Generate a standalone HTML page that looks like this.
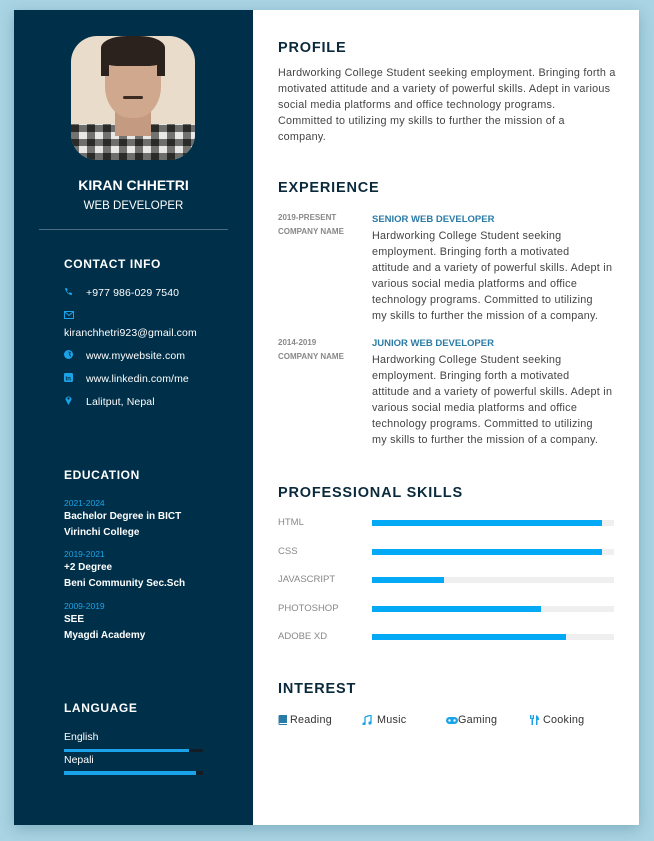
<!DOCTYPE html>
<html><head><meta charset="utf-8">
<style>
*{margin:0;padding:0;box-sizing:border-box}
html,body{width:654px;height:841px;overflow:hidden;background:#a9d4e3;font-family:"Liberation Sans",sans-serif}
.card{position:absolute;left:14px;top:10px;width:625px;height:815px;background:#fff;box-shadow:0 4px 14px rgba(0,60,90,.25)}
.side{position:absolute;left:14px;top:10px;width:239px;height:815px;background:#003049}
.t{position:absolute;white-space:nowrap;line-height:16px;margin-top:1px}
.w{color:#fff}
.h{font-weight:bold;font-size:12px;letter-spacing:.6px;color:#fff}
.rh{font-weight:bold;font-size:14.5px;letter-spacing:.8px;color:#0a2a3c}
.sm{font-size:10.5px;color:#fff;letter-spacing:.1px}
.ed{font-size:10px;font-weight:bold;color:#fff}
.yr{font-size:8.5px;color:#1aa3e8}
.p{font-size:10.8px;color:#444;letter-spacing:.25px}
.gy{font-size:8px;font-weight:bold;color:#888}
.bt{font-size:9.5px;font-weight:bold;color:#2a7ba6}
.sk{font-size:9.5px;color:#888}
.bar{position:absolute;left:372px;width:242px;height:6px;background:#efefef}
.bar i{display:block;height:6px;background:#03a9f4}
.ic{position:absolute;color:#1aa3e8}
</style></head><body>
<div class="card"></div>
<div class="side"></div>

<!-- photo -->
<div style="position:absolute;left:71px;top:36px;width:124px;height:124px;border-radius:26px;overflow:hidden;background:#e9dccb">
 <div style="position:absolute;left:0;top:88px;width:124px;height:36px;background:repeating-linear-gradient(90deg,#2a2a2a 0 8px,#e6e6e6 8px 16px),#555;opacity:.9"></div>
 <div style="position:absolute;left:0;top:88px;width:124px;height:36px;background:repeating-linear-gradient(0deg,rgba(30,30,30,.6) 0 7px,rgba(240,240,240,.3) 7px 14px)"></div>
 <div style="position:absolute;left:44px;top:74px;width:36px;height:26px;background:#c49a80"></div>
 <div style="position:absolute;left:34px;top:12px;width:56px;height:70px;border-radius:45%;background:#d0a88e"></div>
 <div style="position:absolute;left:30px;top:0;width:64px;height:30px;border-radius:40% 40% 25% 25%;background:#2b221e"></div>
 <div style="position:absolute;left:30px;top:20px;width:8px;height:20px;background:#2b221e"></div>
 <div style="position:absolute;left:86px;top:20px;width:8px;height:20px;background:#2b221e"></div>
 <div style="position:absolute;left:52px;top:60px;width:20px;height:3px;background:#3a2a22;border-radius:2px"></div>
</div>

<div class="t w" style="left:14px;width:239px;text-align:center;top:176px;font-weight:bold;font-size:14px">KIRAN CHHETRI</div>
<div class="t w" style="left:14px;width:239px;text-align:center;top:197px;font-size:11.5px">WEB DEVELOPER</div>
<div style="position:absolute;left:39px;top:229px;width:189px;height:1px;background:#4a6b80"></div>

<div class="t h" style="left:64px;top:255px">CONTACT INFO</div>
<svg class="ic" style="left:64px;top:287px" width="9" height="9" viewBox="0 0 10 10"><path d="M1 1.5 3 1 4.2 3.5 3 4.5Q4 6.5 5.5 7L6.5 5.8 9 7 8.5 9Q3 8.5 1 1.5Z" fill="#1aa3e8"/></svg>
<div class="t sm" style="left:86px;top:284px">+977 986-029 7540</div>
<svg class="ic" style="left:64px;top:311px" width="10" height="8" viewBox="0 0 10 8"><rect x=".5" y=".5" width="9" height="7" fill="none" stroke="#1aa3e8"/><path d="M.5 .5 5 4.5 9.5 .5" fill="none" stroke="#1aa3e8"/></svg>
<div class="t sm" style="left:64px;top:324px">kiranchhetri923@gmail.com</div>
<svg class="ic" style="left:64px;top:350px" width="9" height="9" viewBox="0 0 10 10"><circle cx="5" cy="5" r="5" fill="#1aa3e8"/><path d="M5 2 7 3 6 5 7.5 7" stroke="#003049" fill="none"/></svg>
<div class="t sm" style="left:86px;top:347px">www.mywebsite.com</div>
<svg class="ic" style="left:64px;top:373px" width="9" height="9" viewBox="0 0 10 10"><rect width="10" height="10" rx="1.5" fill="#1aa3e8"/><text x="1.6" y="8.3" font-size="7" font-weight="bold" fill="#003049" font-family="Liberation Sans">in</text></svg>
<div class="t sm" style="left:86px;top:370px">www.linkedin.com/me</div>
<svg class="ic" style="left:65px;top:395px" width="7" height="10" viewBox="0 0 7 10"><path d="M3.5 10 .5 4.5A3 3 0 1 1 6.5 4.5Z" fill="#1aa3e8"/><circle cx="3.5" cy="3.4" r="1.2" fill="#003049"/></svg>
<div class="t sm" style="left:86px;top:393px">Lalitput, Nepal</div>

<div class="t h" style="left:64px;top:466px">EDUCATION</div>
<div class="t yr" style="left:64px;top:494px">2021-2024</div>
<div class="t ed" style="left:64px;top:508px">Bachelor Degree in BICT</div>
<div class="t ed" style="left:64px;top:524px">Virinchi College</div>
<div class="t yr" style="left:64px;top:545px">2019-2021</div>
<div class="t ed" style="left:64px;top:559px">+2 Degree</div>
<div class="t ed" style="left:64px;top:575px">Beni Community Sec.Sch</div>
<div class="t yr" style="left:64px;top:597px">2009-2019</div>
<div class="t ed" style="left:64px;top:611px">SEE</div>
<div class="t ed" style="left:64px;top:627px">Myagdi Academy</div>

<div class="t h" style="left:64px;top:699px">LANGUAGE</div>
<div class="t ed" style="left:64px;top:728px;font-weight:normal;font-size:10.5px">English</div>
<div style="position:absolute;left:64px;top:749px;width:139px;height:3px;background:#111c24"><div style="width:125px;height:3px;background:#1aa3e8"></div></div>
<div class="t ed" style="left:64px;top:751px;font-weight:normal;font-size:10.5px">Nepali</div>
<div style="position:absolute;left:64px;top:771px;width:139px;height:4px;background:#111c24"><div style="width:132px;height:4px;background:#1aa3e8"></div></div>

<!-- right -->
<div class="t rh" style="left:278px;top:39px">PROFILE</div>
<div class="t p" style="left:278px;top:64px">Hardworking College Student seeking employment. Bringing forth a<br>motivated attitude and a variety of powerful skills. Adept in various<br>social media platforms and office technology programs.<br>Committed to utilizing my skills to further the mission of a<br>company.</div>

<div class="t rh" style="left:278px;top:179px">EXPERIENCE</div>
<div class="t gy" style="left:278px;top:210px;line-height:14px">2019-PRESENT<br>COMPANY NAME</div>
<div class="t bt" style="left:372px;top:211px">SENIOR WEB DEVELOPER</div>
<div class="t p" style="left:372px;top:227px">Hardworking College Student seeking<br>employment. Bringing forth a motivated<br>attitude and a variety of powerful skills. Adept in<br>various social media platforms and office<br>technology programs. Committed to utilizing<br>my skills to further the mission of a company.</div>
<div class="t gy" style="left:278px;top:335px;line-height:14px">2014-2019<br>COMPANY NAME</div>
<div class="t bt" style="left:372px;top:335px">JUNIOR WEB DEVELOPER</div>
<div class="t p" style="left:372px;top:351px">Hardworking College Student seeking<br>employment. Bringing forth a motivated<br>attitude and a variety of powerful skills. Adept in<br>various social media platforms and office<br>technology programs. Committed to utilizing<br>my skills to further the mission of a company.</div>

<div class="t rh" style="left:278px;top:484px">PROFESSIONAL SKILLS</div>
<div class="t sk" style="left:278px;top:514px">HTML</div><div class="bar" style="top:520px"><i style="width:230px"></i></div>
<div class="t sk" style="left:278px;top:543px">CSS</div><div class="bar" style="top:549px"><i style="width:230px"></i></div>
<div class="t sk" style="left:278px;top:571px">JAVASCRIPT</div><div class="bar" style="top:577px"><i style="width:72px"></i></div>
<div class="t sk" style="left:278px;top:600px">PHOTOSHOP</div><div class="bar" style="top:606px"><i style="width:169px"></i></div>
<div class="t sk" style="left:278px;top:628px">ADOBE XD</div><div class="bar" style="top:634px"><i style="width:194px"></i></div>

<div class="t rh" style="left:278px;top:680px">INTEREST</div>
<svg style="position:absolute;left:278px;top:715px" width="9" height="10" viewBox="0 0 9 10"><path d="M1.5 0H9V8H1.5Q.5 8 .5 9T1.5 10H9V9H1.5" fill="#2a7ba6"/><path d="M.5 1.5Q.5 0 1.5 0V8Q.5 8 .5 9Z" fill="#2a7ba6"/></svg>
<div class="t p" style="left:290px;top:711px;color:#333">Reading</div>
<svg style="position:absolute;left:362px;top:715px" width="10" height="10" viewBox="0 0 10 10"><path d="M3 2 9 0V7.5" stroke="#1aa3e8" stroke-width="1.3" fill="none"/><path d="M3 2V9" stroke="#1aa3e8" stroke-width="1.3"/><circle cx="2" cy="9" r="1.6" fill="#1aa3e8"/><circle cx="8" cy="8" r="1.6" fill="#1aa3e8"/></svg>
<div class="t p" style="left:377px;top:711px;color:#333">Music</div>
<svg style="position:absolute;left:446px;top:717px" width="12" height="7" viewBox="0 0 12 7"><rect width="12" height="7" rx="3.5" fill="#1aa3e8"/><circle cx="3.5" cy="3.5" r="1.2" fill="#fff"/><circle cx="8.5" cy="3.5" r="1.2" fill="#fff"/></svg>
<div class="t p" style="left:458px;top:711px;color:#333">Gaming</div>
<svg style="position:absolute;left:530px;top:715px" width="9" height="10" viewBox="0 0 9 10"><path d="M0 0V4H1.5V10H3V4H4V0H3V3H2.4V0H1.6V3H1V0Z" fill="#1aa3e8"/><path d="M6 10V0Q9 1 9 5H7.5V10Z" fill="#1aa3e8"/></svg>
<div class="t p" style="left:543px;top:711px;color:#333">Cooking</div>
</body></html>
